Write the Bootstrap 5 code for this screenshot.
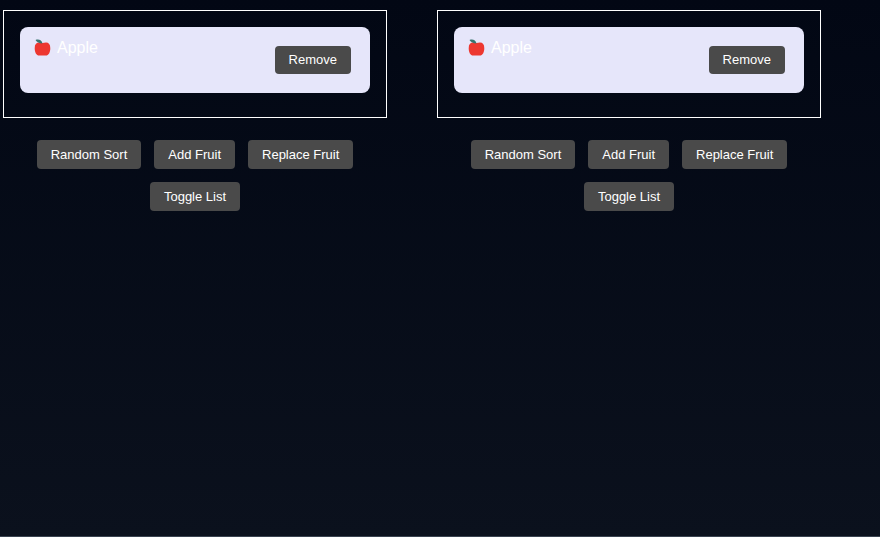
<!DOCTYPE html>
<html lang="en">
<head>
<meta charset="utf-8">
<meta name="viewport" content="width=device-width, initial-scale=1">
<title>Fruit lists</title>
<link href="https://cdn.jsdelivr.net/npm/bootstrap@5.3.0/dist/css/bootstrap.min.css" rel="stylesheet">
<style>
body {
  font-family: "Liberation Sans", Arial, sans-serif;
  font-size: 16px;
  line-height: 20px;
  color: #fff;
  background: linear-gradient(#020714, #0b111d) no-repeat;
  border-bottom: 1px solid #3a4350;
}
.demo-grid { gap: 50px; padding: 10px 3px; }
.fruit-panel { flex: 0 1 384px; }
.fruit-list { padding: 16px 16px 24px; border: 1px solid #fff; }
.fruit-item {
  min-height: 66px;
  padding: 11px 19px 19px 14px;
  border-radius: 8px;
  background: #e6e6fa;
}
.fruit-name { gap: 6px; }
.apple-icon { width: 17px; height: 18px; }
.fruit-actions { gap: 13px; padding: 22px 24px; }
.btn-fruit {
  --bs-btn-padding-x: 14px;
  --bs-btn-padding-y: 4px;
  --bs-btn-font-size: 13px;
  --bs-btn-line-height: 20px;
  --bs-btn-border-width: 0;
  --bs-btn-border-radius: 4px;
  --bs-btn-color: #fff;
  --bs-btn-bg: #4a4a4a;
  --bs-btn-hover-color: #fff;
  --bs-btn-hover-bg: #5c5c5c;
  --bs-btn-active-color: #fff;
  --bs-btn-active-bg: #3a3a3a;
  font-weight: 500;
}
.fruit-actions .btn-fruit { --bs-btn-line-height: 21px; }
.fruit-item .btn-fruit { margin-top: 8px; }
</style>
</head>
<body class="min-vh-100">
<svg class="d-none" xmlns="http://www.w3.org/2000/svg">
  <symbol id="apple" viewBox="0 0 17 18">
    <path d="M5 3.600C2.300 3.600.7 5.400.7 9.200c0 4 1.600 7.300 4.600 7.300h6.400c3 0 4.600-3.300 4.600-7.300 0-3.800-1.600-5.600-4.300-5.600-1.300 0-2.300.5-3.500.5S6.300 3.600 5 3.600Z" fill="#ed3730"/>
    <path d="M1.500 1C4.500 0 7.800.8 8.500 4.500 5.200 4.400 3 3.300 1.500 1Z" fill="#38756f"/>
  </symbol>
</svg>
<main class="demo-grid d-flex">
  <section class="fruit-panel">
    <ul class="fruit-list list-unstyled mb-0">
      <li class="fruit-item d-flex justify-content-between align-items-start">
        <span class="fruit-name d-flex align-items-center"><svg class="apple-icon" aria-hidden="true"><use href="#apple"/></svg>Apple</span>
        <button type="button" class="btn btn-fruit">Remove</button>
      </li>
    </ul>
    <div class="fruit-actions d-flex flex-wrap justify-content-center">
      <button type="button" class="btn btn-fruit">Random Sort</button>
      <button type="button" class="btn btn-fruit">Add Fruit</button>
      <button type="button" class="btn btn-fruit">Replace Fruit</button>
      <button type="button" class="btn btn-fruit">Toggle List</button>
    </div>
  </section>
  <section class="fruit-panel">
    <ul class="fruit-list list-unstyled mb-0">
      <li class="fruit-item d-flex justify-content-between align-items-start">
        <span class="fruit-name d-flex align-items-center"><svg class="apple-icon" aria-hidden="true"><use href="#apple"/></svg>Apple</span>
        <button type="button" class="btn btn-fruit">Remove</button>
      </li>
    </ul>
    <div class="fruit-actions d-flex flex-wrap justify-content-center">
      <button type="button" class="btn btn-fruit">Random Sort</button>
      <button type="button" class="btn btn-fruit">Add Fruit</button>
      <button type="button" class="btn btn-fruit">Replace Fruit</button>
      <button type="button" class="btn btn-fruit">Toggle List</button>
    </div>
  </section>
</main>
<script src="https://cdn.jsdelivr.net/npm/bootstrap@5.3.0/dist/js/bootstrap.bundle.min.js"></script>
</body>
</html>
